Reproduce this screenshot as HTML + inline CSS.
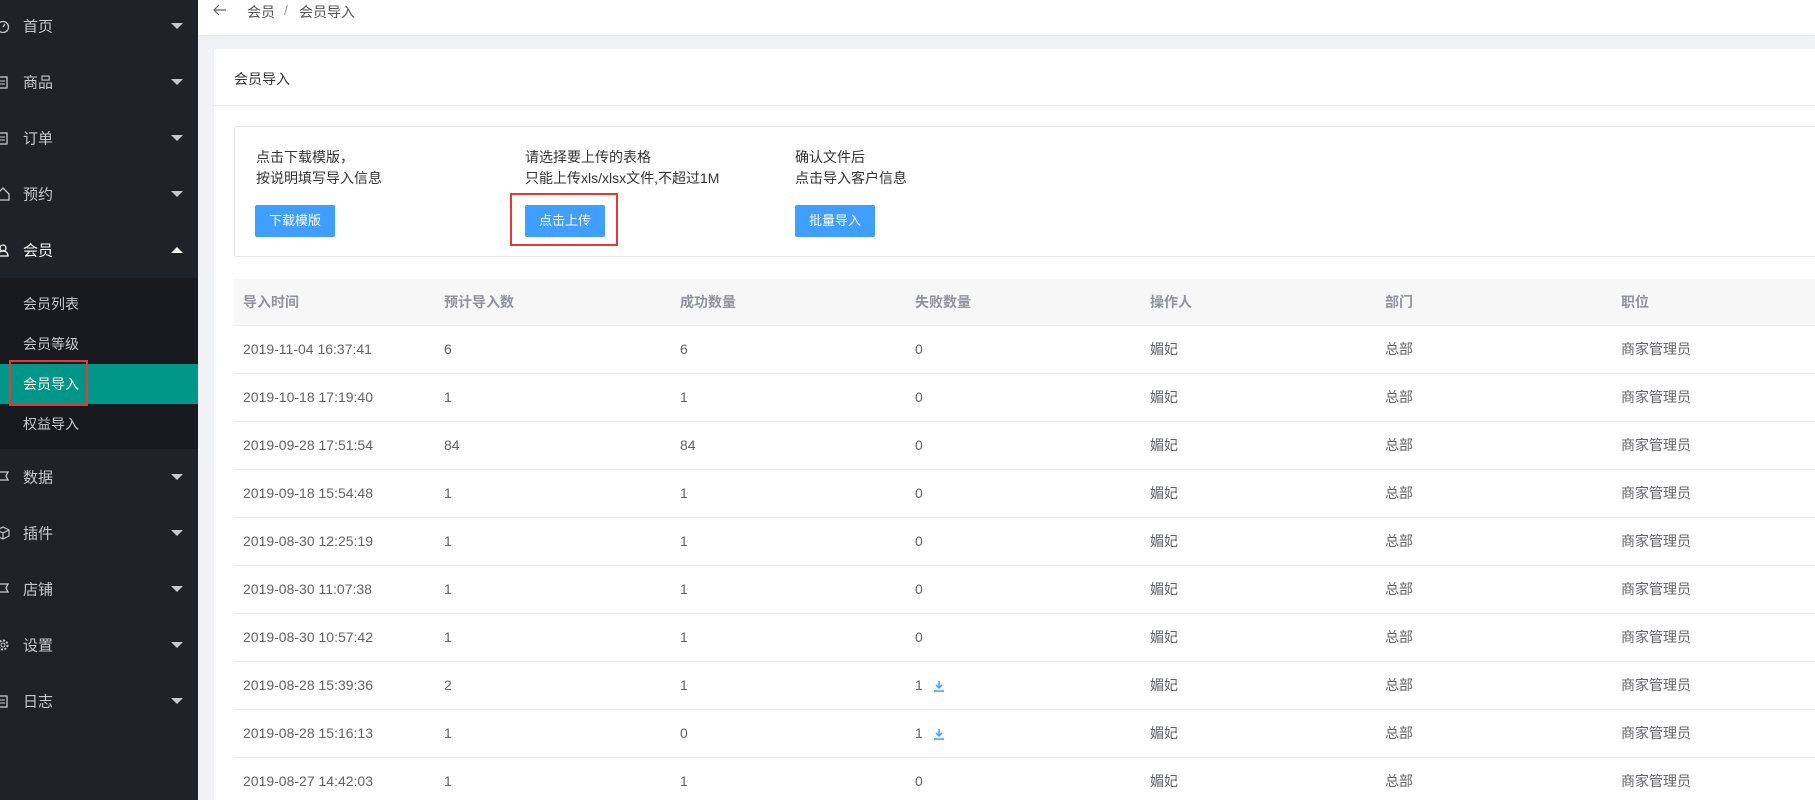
<!DOCTYPE html>
<html><head><meta charset="utf-8"><style>
*{margin:0;padding:0;box-sizing:border-box}
html,body{width:1815px;height:800px;overflow:hidden}
body{background:#f0f2f5;font-family:"Liberation Sans","Noto Sans CJK SC",sans-serif;position:relative}
.side{position:absolute;left:0;top:0;width:198px;height:800px;background:#20222a}
.mi{position:absolute;left:0;width:198px;height:56px;color:#c8c9cc;font-size:15px}
.mi .t{position:absolute;left:23px;top:50%;transform:translateY(-50%)}
.mi .ic{position:absolute;left:-4px;top:50%;transform:translateY(-50%);width:14px;height:14px}
.mi .ar{position:absolute;left:171px;top:50%;margin-top:-3px;width:0;height:0;border-left:6px solid transparent;border-right:6px solid transparent;border-top:6px solid #c8c9cc}
.mi .ar.up{border-top:0;border-bottom:6px solid #fff}
.sub{position:absolute;left:0;top:278px;width:198px;height:171px;background:#191a20}
.si{position:absolute;left:0;width:198px;height:40px;line-height:40px;padding-left:23px;color:#c8c9cc;font-size:14px}
.si.act{background:#009688;color:#fff}
.hdr{position:absolute;left:198px;top:0;right:0;height:35px;background:#fff;box-shadow:0 1px 3px rgba(0,0,0,.06)}
.bc{position:absolute;top:2px;font-size:14px;color:#555}
.card{position:absolute;left:214px;top:49px;width:1601px;height:751px;background:#fff;overflow:hidden}
.ct{position:absolute;left:20px;top:20px;font-size:14px;color:#333}
.cl{position:absolute;left:0;right:0;top:56px;border-top:1px solid #eee}
.box{position:absolute;left:20px;top:77px;width:1700px;height:131px;border:1px solid #e6e6e6;border-radius:3px}
.tx{position:absolute;font-size:14px;color:#333;line-height:21px}
.btn{position:absolute;width:80px;height:32px;background:#409eff;color:#fff;font-size:13px;text-align:center;line-height:32px;border-radius:2px}
.red{position:absolute;border:2px solid #e53935}
.tw{position:absolute;left:234px;top:279px;width:1581px;height:521px;overflow:hidden}
table{width:1600px;border-collapse:collapse;font-size:14px;color:#606266;table-layout:fixed}
th{height:46px;background:#f7f7f7;text-align:left;font-weight:bold;color:#909399;padding-left:9px;border-bottom:1px solid #ebeef5}
td{height:48px;padding-left:9px;border-bottom:1px solid #ebeef5}
.dl{display:inline-block;vertical-align:middle;margin-left:10px}
</style></head><body>
<div class="side">
 <div class="mi" style="top:-2px"><svg class="ic" viewBox="0 0 14 14"><circle cx="7" cy="8" r="5.5" fill="none" stroke="#c8c9cc" stroke-width="1.3"/><path d="M7 8l2-3" stroke="#c8c9cc" stroke-width="1.3"/></svg><span class="t">首页</span><span class="ar"></span></div>
 <div class="mi" style="top:54px"><svg class="ic" viewBox="0 0 14 14"><rect x="2" y="2" width="9" height="11" fill="none" stroke="#c8c9cc" stroke-width="1.3"/><path d="M4 6h5M4 9h5" stroke="#c8c9cc"/></svg><span class="t">商品</span><span class="ar"></span></div>
 <div class="mi" style="top:110px"><svg class="ic" viewBox="0 0 14 14"><rect x="2" y="2" width="9" height="11" fill="none" stroke="#c8c9cc" stroke-width="1.3"/><path d="M4 6h5M4 9h5" stroke="#c8c9cc"/></svg><span class="t">订单</span><span class="ar"></span></div>
 <div class="mi" style="top:166px"><svg class="ic" viewBox="0 0 14 14"><path d="M1 7L7 1l6 6v6H1z" fill="none" stroke="#c8c9cc" stroke-width="1.3"/></svg><span class="t">预约</span><span class="ar"></span></div>
 <div class="mi" style="top:222px;color:#fff"><svg class="ic" viewBox="0 0 14 14"><circle cx="7" cy="5" r="3" fill="none" stroke="#fff" stroke-width="1.3"/><path d="M2 13c0-3 2-5 5-5s5 2 5 5z" fill="none" stroke="#fff" stroke-width="1.3"/></svg><span class="t">会员</span><span class="ar up"></span></div>
 <div class="sub">
  <div class="si" style="top:6px">会员列表</div>
  <div class="si" style="top:46px">会员等级</div>
  <div class="si act" style="top:86px">会员导入</div>
  <div class="si" style="top:126px">权益导入</div>
 </div>
 <div class="red" style="left:9px;top:360px;width:79px;height:46px"></div>
 <div class="mi" style="top:449px"><svg class="ic" viewBox="0 0 14 14"><path d="M2 13V2h10l-2 4 2 4H2" fill="none" stroke="#c8c9cc" stroke-width="1.3"/></svg><span class="t">数据</span><span class="ar"></span></div>
 <div class="mi" style="top:505px"><svg class="ic" viewBox="0 0 14 14"><path d="M7 1l6 3v6l-6 3-6-3V4z M1 4l6 3 6-3M7 7v6" fill="none" stroke="#c8c9cc" stroke-width="1.2"/></svg><span class="t">插件</span><span class="ar"></span></div>
 <div class="mi" style="top:561px"><svg class="ic" viewBox="0 0 14 14"><path d="M2 13V2h10l-2 4 2 4H2" fill="none" stroke="#c8c9cc" stroke-width="1.3"/></svg><span class="t">店铺</span><span class="ar"></span></div>
 <div class="mi" style="top:617px"><svg class="ic" viewBox="0 0 14 14"><circle cx="7" cy="7" r="4.5" fill="none" stroke="#c8c9cc" stroke-width="2" stroke-dasharray="2 1.5"/><circle cx="7" cy="7" r="2" fill="none" stroke="#c8c9cc"/></svg><span class="t">设置</span><span class="ar"></span></div>
 <div class="mi" style="top:673px"><svg class="ic" viewBox="0 0 14 14"><rect x="2" y="2" width="9" height="11" fill="none" stroke="#c8c9cc" stroke-width="1.3"/><path d="M4 6h5M4 9h5" stroke="#c8c9cc"/></svg><span class="t">日志</span><span class="ar"></span></div>
</div>
<div class="hdr">
 <svg style="position:absolute;left:15px;top:4px" width="14" height="12" viewBox="0 0 14 12"><path d="M13 6H2M6 1L1 6l5 5" fill="none" stroke="#666" stroke-width="1.2"/></svg>
 <span class="bc" style="left:49px">会员</span><span class="bc" style="left:86px;color:#999">/</span><span class="bc" style="left:101px">会员导入</span>
</div>
<div class="card">
 <div class="ct">会员导入</div><div class="cl"></div>
 <div class="box">
  <div class="tx" style="left:21px;top:20px">点击下载模版，<br>按说明填写导入信息</div>
  <div class="tx" style="left:290px;top:20px">请选择要上传的表格<br>只能上传xls/xlsx文件,不超过1M</div>
  <div class="tx" style="left:560px;top:20px">确认文件后<br>点击导入客户信息</div>
 </div>
</div>
<div class="btn" style="left:255px;top:205px">下载模版</div>
<div class="btn" style="left:525px;top:205px">点击上传</div>
<div class="btn" style="left:795px;top:205px">批量导入</div>
<div class="red" style="left:510px;top:193px;width:108px;height:53px"></div>
<div class="tw">
<table>
<colgroup><col style="width:201px"><col style="width:236px"><col style="width:235px"><col style="width:235px"><col style="width:235px"><col style="width:236px"><col></colgroup>
<tr><th>导入时间</th><th>预计导入数</th><th>成功数量</th><th>失败数量</th><th>操作人</th><th>部门</th><th>职位</th></tr>
<tr><td>2019-11-04 16:37:41</td><td>6</td><td>6</td><td>0</td><td>媚妃</td><td>总部</td><td>商家管理员</td></tr>
<tr><td>2019-10-18 17:19:40</td><td>1</td><td>1</td><td>0</td><td>媚妃</td><td>总部</td><td>商家管理员</td></tr>
<tr><td>2019-09-28 17:51:54</td><td>84</td><td>84</td><td>0</td><td>媚妃</td><td>总部</td><td>商家管理员</td></tr>
<tr><td>2019-09-18 15:54:48</td><td>1</td><td>1</td><td>0</td><td>媚妃</td><td>总部</td><td>商家管理员</td></tr>
<tr><td>2019-08-30 12:25:19</td><td>1</td><td>1</td><td>0</td><td>媚妃</td><td>总部</td><td>商家管理员</td></tr>
<tr><td>2019-08-30 11:07:38</td><td>1</td><td>1</td><td>0</td><td>媚妃</td><td>总部</td><td>商家管理员</td></tr>
<tr><td>2019-08-30 10:57:42</td><td>1</td><td>1</td><td>0</td><td>媚妃</td><td>总部</td><td>商家管理员</td></tr>
<tr><td>2019-08-28 15:39:36</td><td>2</td><td>1</td><td>1<svg class="dl" width="12" height="12" viewBox="0 0 12 12"><path d="M6 1v7M3 5l3 3 3-3M1 11h10" fill="none" stroke="#409eff" stroke-width="1.5"/></svg></td><td>媚妃</td><td>总部</td><td>商家管理员</td></tr>
<tr><td>2019-08-28 15:16:13</td><td>1</td><td>0</td><td>1<svg class="dl" width="12" height="12" viewBox="0 0 12 12"><path d="M6 1v7M3 5l3 3 3-3M1 11h10" fill="none" stroke="#409eff" stroke-width="1.5"/></svg></td><td>媚妃</td><td>总部</td><td>商家管理员</td></tr>
<tr><td>2019-08-27 14:42:03</td><td>1</td><td>1</td><td>0</td><td>媚妃</td><td>总部</td><td>商家管理员</td></tr>
</table>
</div>
</body></html>
